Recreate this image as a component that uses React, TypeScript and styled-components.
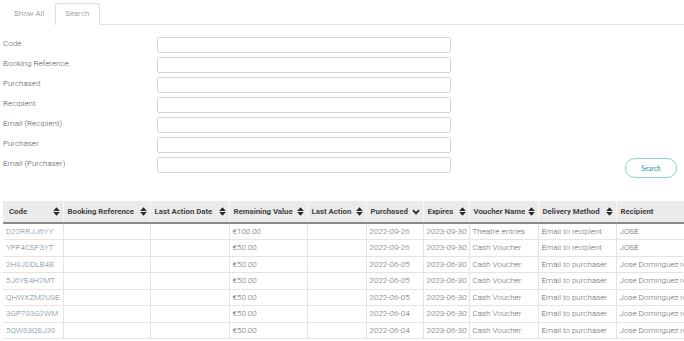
import React from "react";
import styled, { createGlobalStyle } from "styled-components";

const Global = createGlobalStyle`
  html, body { margin: 0; padding: 0; background: #fff; }
  body { font-family: Roboto, "Liberation Sans", Arial, sans-serif; overflow: hidden; }
  * { box-sizing: border-box; }
`;

const Page = styled.div`
  width: 684px;
  height: 341px;
  overflow: hidden;
  padding: 3px 0 0 3px;
`;

const TabBar = styled.div`
  display: flex;
  align-items: flex-end;
  height: 22px;
  border-bottom: 1px solid #e2e2e2;
`;

const Tab = styled.div<{ $active?: boolean }>`
  height: ${(p) => (p.$active ? "22px" : "21px")};
  padding: 0 ${(p) => (p.$active ? "9px" : "10px")} 3px;
  display: flex;
  align-items: center;
  font-size: 8px;
  color: ${(p) => (p.$active ? "#888" : "#777")};
  font-weight: 300;
  border: 1px solid ${(p) => (p.$active ? "#dedede" : "transparent")};
  border-bottom: none;
  border-radius: 3px 3px 0 0;
  background: #fff;
  margin-bottom: -1px;
`;

const FormArea = styled.div`
  display: flex;
  padding-top: 12px;
`;

const Fields = styled.div`
  display: flex;
  flex-direction: column;
`;

const FieldRow = styled.div`
  display: flex;
  align-items: center;
  height: 16px;
  margin-bottom: 4px;
`;

const Label = styled.label`
  width: 154px;
  font-size: 8px;
  font-weight: 300;
  color: #555;
  margin-top: -4px;
`;

const Input = styled.div`
  width: 294px;
  height: 16px;
  border: 1px solid #d6d6d6;
  border-radius: 2px;
  background: #fff;
`;

const Actions = styled.div`
  margin-left: auto;
  margin-right: 7px;
  align-self: flex-end;
  margin-bottom: -1px;
`;

const SearchButton = styled.button`
  width: 52px;
  height: 20px;
  border: 1px solid #86d0d6;
  border-radius: 10px;
  background: #fff;
  color: #56a9b2;
  font-family: Lato, "Open Sans", sans-serif;
  font-weight: 700;
  font-size: 6.5px;
  padding: 0;
`;

const TableWrap = styled.div`
  margin-top: 24px;
  width: 720px;
`;

const Table = styled.table`
  border-collapse: collapse;
  table-layout: fixed;
  width: 720px;
  font-size: 8px;
`;

const Th = styled.th`
  background: #ebebeb;
  height: 22px;
  padding: 0 3px 0 4px;
  text-align: left;
  font-weight: 700;
  font-size: 7.8px;
  color: #444;
  white-space: nowrap;
  border-bottom: 2px solid #8a8a8a;
  border-left: 1px solid #f8f8f8;
  &:first-child { border-left: none; padding-left: 6px; }
`;

const ThInner = styled.div`
  display: flex;
  align-items: center;
  justify-content: space-between;
  gap: 2px;
`;

const Td = styled.td<{ $link?: boolean }>`
  height: 16.5px;
  padding: 0 3px;
  font-weight: 300;
  font-size: 8px;
  color: ${(p) => (p.$link ? "#6f8aa0" : "#666")};
  white-space: nowrap;
  overflow: hidden;
  border-bottom: 1px solid #e4e4e4;
  border-left: 1px solid #e4e4e4;
  &:first-child { border-left: none; }
`;

const SortIcon = () => (
  <svg width="7" height="9" viewBox="0 0 7 9" style={{ flexShrink: 0 }}>
    <path d="M3.5 0.3 L6.8 4 L0.2 4 Z" fill="#2a2a2a" />
    <path d="M3.5 8.7 L6.8 5 L0.2 5 Z" fill="#2a2a2a" />
  </svg>
);

const ChevronIcon = () => (
  <svg width="8" height="6" viewBox="0 0 8 6" style={{ flexShrink: 0 }}>
    <path d="M1 1.2 L4 4.4 L7 1.2" stroke="#2a2a2a" strokeWidth="1.8" fill="none" />
  </svg>
);

const labels = [
  "Code",
  "Booking Reference",
  "Purchased",
  "Recipient",
  "Email (Recipient)",
  "Purchaser",
  "Email (Purchaser)",
];

const columns: { title: string; width: number; icon: "sort" | "chev" | "none" }[] = [
  { title: "Code", width: 60, icon: "sort" },
  { title: "Booking Reference", width: 87, icon: "sort" },
  { title: "Last Action Date", width: 79, icon: "sort" },
  { title: "Remaining Value", width: 78, icon: "sort" },
  { title: "Last Action", width: 59, icon: "sort" },
  { title: "Purchased", width: 57, icon: "chev" },
  { title: "Expires", width: 46, icon: "sort" },
  { title: "Voucher Name", width: 69, icon: "sort" },
  { title: "Delivery Method", width: 78, icon: "sort" },
  { title: "Recipient", width: 107, icon: "none" },
];

const rows = [
  ["D22RRJJ6YY", "", "", "€100.00", "", "2022-09-26", "2023-09-30", "Theatre entries", "Email to recipient", "JOSE"],
  ["YPF4CSP3YT", "", "", "€50.00", "", "2022-09-26", "2023-09-30", "Cash Voucher", "Email to recipient", "JOSE"],
  ["2H9JDDLB4B", "", "", "€50.00", "", "2022-06-05", "2023-06-30", "Cash Voucher", "Email to purchaser", "Jose Dominguez re"],
  ["5J6YE4H2MT", "", "", "€50.00", "", "2022-06-05", "2023-06-30", "Cash Voucher", "Email to purchaser", "Jose Dominguez re"],
  ["QHWXZM2U9E", "", "", "€50.00", "", "2022-06-05", "2023-06-30", "Cash Voucher", "Email to purchaser", "Jose Dominguez re"],
  ["3GP793G2WM", "", "", "€50.00", "", "2022-06-04", "2023-06-30", "Cash Voucher", "Email to purchaser", "Jose Dominguez re"],
  ["5QW63QSJ39", "", "", "€50.00", "", "2022-06-04", "2023-06-30", "Cash Voucher", "Email to purchaser", "Jose Dominguez re"],
];

export default function App() {
  return (
    <>
      <Global />
      <Page>
        <TabBar>
          <Tab>Show All</Tab>
          <Tab $active>Search</Tab>
        </TabBar>
        <FormArea>
          <Fields>
            {labels.map((l) => (
              <FieldRow key={l}>
                <Label>{l}</Label>
                <Input />
              </FieldRow>
            ))}
          </Fields>
          <Actions>
            <SearchButton>Search</SearchButton>
          </Actions>
        </FormArea>
        <TableWrap>
          <Table>
            <colgroup>
              {columns.map((c) => (
                <col key={c.title} style={{ width: c.width }} />
              ))}
            </colgroup>
            <thead>
              <tr>
                {columns.map((c) => (
                  <Th key={c.title}>
                    <ThInner>
                      <span>{c.title}</span>
                      {c.icon === "sort" && <SortIcon />}
                      {c.icon === "chev" && <ChevronIcon />}
                    </ThInner>
                  </Th>
                ))}
              </tr>
            </thead>
            <tbody>
              {rows.map((r) => (
                <tr key={r[0]}>
                  {r.map((v, i) => (
                    <Td key={i} $link={i === 0}>
                      {v}
                    </Td>
                  ))}
                </tr>
              ))}
            </tbody>
          </Table>
        </TableWrap>
      </Page>
    </>
  );
}
